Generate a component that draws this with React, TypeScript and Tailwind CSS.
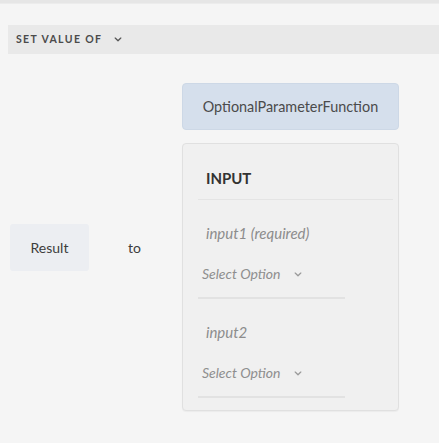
const Chevron = ({ className }: { className?: string }) => (
    <svg viewBox="0 0 10 6" className={className} fill="none" stroke="currentColor" strokeWidth="1.6" strokeLinecap="round" strokeLinejoin="round">
        <path d="M1.5 1.2 L5 4.6 L8.5 1.2" />
    </svg>
);

const ParamField = ({ label }: { label: string }) => (
    <div className="pl-[15px]">
        <div className="pl-[8px] mt-[24px] text-[15px] leading-[18px] italic text-[#8c8c8c]">{label}</div>
        <div className="w-[147px] border-b-2 border-[#e2e2e2] pb-[14px]">
            <button className="mt-[23px] ml-[4px] flex items-center gap-[13px] text-[14px] leading-[18px] italic text-[#8e8e8e]">
                Select Option
                <Chevron className="w-[8px] h-[5px] text-[#9a9a9a]" />
            </button>
        </div>
    </div>
);

const App = () => {
    return (
        <div className="min-h-[443px] w-full bg-[#f5f5f5] font-['Lato','Open_Sans',sans-serif] overflow-hidden">
            <div className="h-[4px] bg-[#e6e6e6] border-b border-[#ececec]"></div>

            {/* Header bar */}
            <div className="ml-[8px] mt-[21px] h-[29px] bg-[#e9e9e9] flex items-center pl-[8px] gap-[12px]">
                <span className="text-[10.5px] font-bold tracking-[0.13em] uppercase text-[#4b4b4b]">Set Value Of</span>
                <Chevron className="w-[8px] h-[5px] text-[#555]" />
            </div>

            {/* Expression row */}
            <div className="mt-[29px] flex items-center">
                <button className="ml-[10px] w-[79px] h-[47px] rounded-[3px] bg-[#eceef2] text-[14px] text-[#3d3d3d]">
                    Result
                </button>
                <span className="ml-[39px] text-[14px] text-[#3d3d3d]">to</span>

                <div className="ml-[41px] w-[217px] flex flex-col gap-[13px]">
                    <div className="h-[47px] rounded-[4px] bg-[#d5dfec] border border-[#cdd8e6] flex items-center justify-center text-[14.4px] text-[#4b4b4b]">
                        OptionalParameterFunction
                    </div>

                    <div className="rounded-[4px] bg-[#f0f0f0] border border-[#e0e0e0] shadow-[0_1px_1px_rgba(0,0,0,0.04)] pb-[12px]">
                        <div className="ml-[15px] mr-[5px] border-b border-[#e4e4e4] pt-[25px] pb-[12px] pl-[8px] text-[15px] leading-[18px] font-bold text-[#333]">
                            INPUT
                        </div>
                        <ParamField label="input1 (required)" />
                        <ParamField label="input2" />
                    </div>
                </div>
            </div>
        </div>
    );
};

export default App;
